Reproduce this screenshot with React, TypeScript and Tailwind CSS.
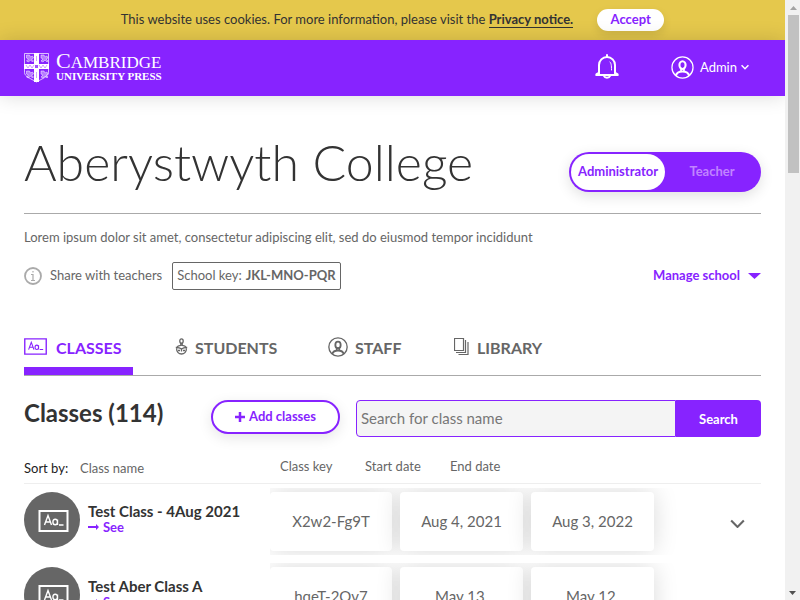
import React from "react";

const rows = [
  { name: "Test Class - 4Aug 2021", key: "X2w2-Fg9T", start: "Aug 4, 2021", end: "Aug 3, 2022" },
  { name: "Test Aber Class A", key: "hqeT-2Ov7", start: "May 13, 2021", end: "May 12, 2022" },
];

function Shield() {
  const lion = "M0 0h3l1 2 2-1 1 2-2 1 2 2-1 1-2-2-2 2-2-1 2-2-2-1z";
  return (
    <svg width="25" height="30" viewBox="0 0 25 30" fill="none" stroke="white" aria-hidden="true">
      <path d="M.5 .5h24v19c0 4-6 6-12 9.500c-6-3.500-12-5.500-12-9.500z" strokeOpacity=".7" />
      <path d="M12.500 0v29M0 13.500h25" strokeWidth="5" />
      <g fill="white" fillOpacity=".4" stroke="white" strokeOpacity=".8" strokeWidth=".6">
        <path d={lion} transform="translate(2.500 2)" />
        <path d={lion} transform="translate(17 2)" />
        <path d={lion} transform="translate(2.500 18)" />
        <path d={lion} transform="translate(17 18)" />
      </g>
      <path d="M2 12l2 3 2-3M6 12l2 3 2-3M15 12l2 3 2-3M19 12l2 3 2-3M12.500 3v5M12.500 19v6" stroke="#8723ff" strokeOpacity=".6" strokeWidth=".7" />
      <path d="M11 12h3v3h-3z" fill="#8723ff" fillOpacity=".8" stroke="none" />
    </svg>
  );
}

function Bell() {
  return (
    <svg width="24" height="26" viewBox="0 0 24 26" fill="none" stroke="white" strokeWidth="2" strokeLinecap="round" strokeLinejoin="round" aria-hidden="true">
      <path d="M12 1v1.500M4 19.500v-8.500a8 8 0 0 1 16 0v8.500" />
      <path d="M4 18.500c0 1.200-2.800.8-2.800 2.500h21.600c0-1.700-2.800-1.300-2.800-2.500M9 22c.8 2.400 5.200 2.400 6 0" />
      <path d="M15 8c1.200 1.200 1.500 3 1.500 8" strokeWidth="1" />
    </svg>
  );
}

function Person({ size, stroke = 1.3 }: { size: number; stroke?: number }) {
  return (
    <svg width={size} height={size} viewBox="0 0 24 24" fill="none" stroke="currentColor" strokeWidth={stroke} aria-hidden="true">
      <circle cx="12" cy="12" r="11" />
      <ellipse cx="12" cy="9.500" rx="3.200" ry="4" strokeWidth="2.200" />
      <path d="M10.500 13v3M13.500 13v3" strokeWidth="1.800" />
      <path d="M5 20.500c1-3.500 4-4.300 7-4.300s6 .8 7 4.300" strokeWidth="2.200" />
    </svg>
  );
}

function Board({ width, height, stroke }: { width: number; height: number; stroke: number }) {
  return (
    <svg width={width} height={height} viewBox="0 0 30 22" fill="none" stroke="currentColor" strokeWidth={stroke} aria-hidden="true">
      <path d="M1 1h28v20H1z" />
      <path d="M6 15l3.500-9.500L13 15M7.200 12h4.600M19 15V9.500M19 12a2.300 2.800 0 1 0-4.600 0a2.300 2.800 0 1 0 4.600 0M20.500 15h4.500" strokeWidth="1.400" />
    </svg>
  );
}

function Student() {
  return (
    <svg width="13" height="17" viewBox="0 0 13 17" fill="none" stroke="currentColor" strokeWidth="1.300" aria-hidden="true">
      <ellipse cx="6.500" cy="3" rx="1.700" ry="2.200" />
      <path d="M5.800 5v2.300C4 7.500 2.500 8 2 9.300M7.200 5v2.300c1.800.2 3.300.7 3.800 2" />
      <path d="M.8 9.500c3 0 4.700.6 5.700 1.500 1-.9 2.700-1.500 5.700-1.500M1.500 10c0 8 10 8 10 0M6.500 11v2.500M3 12.500h2M8 12.500h2" />
    </svg>
  );
}

function Library() {
  return (
    <svg width="16" height="18" viewBox="0 0 16 18" fill="none" stroke="currentColor" aria-hidden="true">
      <path d="M.5 .5h9v12h-9zM2 14.500h9.500V2M4.500 16.500h9.500V4" strokeWidth="1.200" />
    </svg>
  );
}

function Chevron({ width, stroke }: { width: number; stroke: number }) {
  return (
    <svg width={width} height={width / 2 + 2} viewBox="0 0 14 9" fill="none" stroke="currentColor" strokeWidth={stroke} aria-hidden="true">
      <path d="M1 1.500l6 6 6-6" />
    </svg>
  );
}

const tabs = [
  { label: "CLASSES", icon: <Board width={23} height={17} stroke={1.800} />, box: "w-[109px] text-[#8723ff]", gap: "gap-[9px]", active: true },
  { label: "STUDENTS", icon: <Student />, box: "ml-[42px] w-[112px]", gap: "gap-[7px]", active: false },
  { label: "STAFF", icon: <Person size={20} stroke={1.600} />, box: "ml-[41px] w-[85px]", gap: "gap-[7px]", active: false },
  { label: "LIBRARY", icon: <Library />, box: "ml-[41px] w-[100px]", gap: "gap-[7px]", active: false },
];

const card = "rounded-sm bg-white px-5 pt-[19px] pb-5 text-center shadow-[0_0_25px_rgba(0,0,0,0.15)]";

export default function App() {
  return (
    <div className="flex h-screen overflow-hidden bg-white font-['Lato',sans-serif] text-[13px] leading-4 text-[#666]">
      <div className="min-w-0 flex-1 overflow-hidden">
        <aside className="flex h-10 items-center justify-center gap-6 bg-[#e5c84c] text-[#333]">
          <p className="pb-[2px]">
            This website uses cookies. For more information, please visit the{" "}
            <a href="#privacy" className="border-b border-[#333] font-bold">Privacy notice.</a>
          </p>
          <button className="h-[22px] w-[67px] rounded-full bg-white pb-[2px] font-bold text-[#8723ff] shadow-[0_4px_10px_rgba(0,0,0,0.1)]">Accept</button>
        </aside>

        <header className="relative flex h-14 items-center bg-[#8723ff] pr-9 pl-6 text-white shadow-[0_0_20px_rgba(0,0,0,0.15)]">
          <a href="#home" className="flex items-center gap-[7px] font-['Liberation_Serif',serif] leading-none">
            <Shield />
            <span className="flex flex-col">
              <span className="text-[17px] leading-[14px]"><span className="text-[22px]">C</span>AMBRIDGE</span>
              <span className="text-[11px] leading-3 font-bold">UNIVERSITY PRESS</span>
            </span>
          </a>
          <button className="mr-[52px] ml-auto pb-[2px]" aria-label="Notifications"><Bell /></button>
          <button className="flex items-center gap-1 pb-[2px]">
            <span className="flex items-center gap-[6px]"><Person size={23} />Admin</span>
            <Chevron width={8} stroke={2.500} />
          </button>
        </header>

        <main className="px-6">
          <div className="flex h-[118px] items-start justify-between border-b border-[#aaa] pt-9">
            <h1 className="text-[50px] leading-[60px] font-light text-[#333]">Aberystwyth College</h1>
            <div className="mt-5 flex h-10 w-48 rounded-full bg-[#8723ff] p-[2px] font-bold shadow-[0_4px_14px_rgba(0,0,0,0.12)]">
              <button className="w-[94px] rounded-full bg-white pb-[2px] text-[#8723ff]">Administrator</button>
              <button className="flex-1 pb-[2px] text-[#c184ff]">Teacher</button>
            </div>
          </div>

          <p className="mt-[15px]">Lorem ipsum dolor sit amet, consectetur adipiscing elit, sed do eiusmod tempor incididunt</p>

          <div className="mt-[17px] flex h-7 items-center">
            <svg width="18" height="18" viewBox="0 0 18 18" fill="none" stroke="#aaa" aria-hidden="true">
              <circle cx="9" cy="9" r="8" strokeWidth="1.800" />
              <path d="M7 7.500h2v6M7 13.500h4M9 4v1.500" strokeWidth="1.200" />
            </svg>
            <span className="ml-2 pb-[2px]">Share with teachers</span>
            <span className="ml-[10px] flex h-7 items-center gap-1 rounded-xs border border-[#666] px-1 pb-[2px]">School key: <b>JKL-MNO-PQR</b></span>
            <button className="ml-auto flex items-center gap-2 font-bold text-[#8723ff]">
              <span className="pb-[2px]">Manage school</span>
              <svg width="13" height="6" viewBox="0 0 13 6" fill="currentColor" aria-hidden="true"><path d="M0 0h13L6.500 6z" /></svg>
            </button>
          </div>

          <nav className="mt-[38px] flex h-12 border-b border-[#aaa]">
            {tabs.map((tab) => (
              <a key={tab.label} href={"#" + tab.label.toLowerCase()} className={"flex flex-col justify-between text-base font-bold " + tab.box}>
                <span className={"flex h-[39px] items-center pb-[2px] " + tab.gap}>
                  {tab.icon}
                  <span className="pt-[2px]">{tab.label}</span>
                </span>
                {tab.active && <span className="h-2 bg-[#8723ff]" />}
              </a>
            ))}
          </nav>

          <div className="mt-6 flex items-start">
            <h2 className="w-[187px] text-[24px] leading-[26px] font-bold text-[#333]">Classes (114)</h2>
            <button className="flex h-[34px] w-[129px] items-center justify-center gap-1 rounded-full border-2 border-[#8723ff] font-bold text-[#8723ff] shadow-[0_4px_14px_rgba(0,0,0,0.1)]">
              <svg width="10" height="10" viewBox="0 0 10 10" stroke="currentColor" strokeWidth="2.500" aria-hidden="true"><path d="M5 0v10M0 5h10" /></svg>
              <span className="pb-[2px]">Add classes</span>
            </button>
            <form className="ml-4 flex h-[37px] flex-1" onSubmit={(e) => e.preventDefault()}>
              <input aria-label="Search for class name" placeholder="Search for class name" className="min-w-0 flex-1 rounded-l-sm border border-[#8723ff] bg-[#f4f4f4] px-1 pb-[2px] text-[15px] placeholder:text-[#777]" />
              <button className="w-[85px] rounded-r-sm bg-[#8723ff] font-bold text-white">Search</button>
            </form>
          </div>

          <div className="mt-[18px] flex h-[29px] border-b border-[#eee] pt-[3px]">
            <span className="w-14 pt-[2px] text-[#222]">Sort by:</span>
            <button className="flex w-[200px] items-start pt-[2px]">Class name</button>
            <button className="flex w-[85px] items-start">Class key</button>
            <button className="flex w-[85px] items-start">Start date</button>
            <button className="flex items-start">End date</button>
          </div>

          <table className="block w-full text-[15px] leading-5">
            <tbody className="block">
              {rows.map((row) => (
                <tr key={row.name} className="flex min-h-[75px] py-2 [clip-path:inset(4px_0)]">
                  <td className="relative z-10 -my-2 flex w-[246px] items-start bg-white py-2">
                    <span className="flex size-14 shrink-0 items-center justify-center rounded-full bg-[#666] pt-[2px] pl-[2px] text-white">
                      <Board width={31} height={22} stroke={2} />
                    </span>
                    <div className="ml-2 pt-[10px] font-bold text-[#333]">
                      <div className="leading-[18px]">{row.name}</div>
                      <a href="#see" className="flex items-center gap-1 text-[13px] leading-[14px] text-[#8723ff]">
                        <svg width="11" height="6" viewBox="0 0 11 6" fill="currentColor" aria-hidden="true"><path d="M0 2h8V0l3 3-3 3V4H0z" /></svg>
                        See
                      </a>
                    </div>
                  </td>
                  <td className={"w-[122px] " + card}>{row.key}</td>
                  <td className={"ml-2 w-[123px] " + card}>{row.start}</td>
                  <td className={"ml-2 w-[123px] " + card}>{row.end}</td>
                  <td className="ml-auto flex items-center pt-1 pr-4">
                    <button aria-label={"Expand " + row.name}><Chevron width={15} stroke={2} /></button>
                  </td>
                </tr>
              ))}
            </tbody>
          </table>
        </main>
      </div>

      <div className="flex w-[15px] flex-col items-center justify-between bg-[#f1f1f1] py-[5px]" aria-hidden="true">
        <div className="flex w-full flex-col items-center gap-[5px] pl-px">
          <svg width="7" height="5" viewBox="0 0 7 5" fill="#a3a3a3"><path d="M0 5h7L3.500 1z" /></svg>
          <div className="h-[158px] w-[11px] bg-[#c1c1c1]" />
        </div>
        <svg width="7" height="4" viewBox="0 0 7 4" fill="#505050"><path d="M0 0h7L3.500 4z" /></svg>
      </div>
    </div>
  );
}
